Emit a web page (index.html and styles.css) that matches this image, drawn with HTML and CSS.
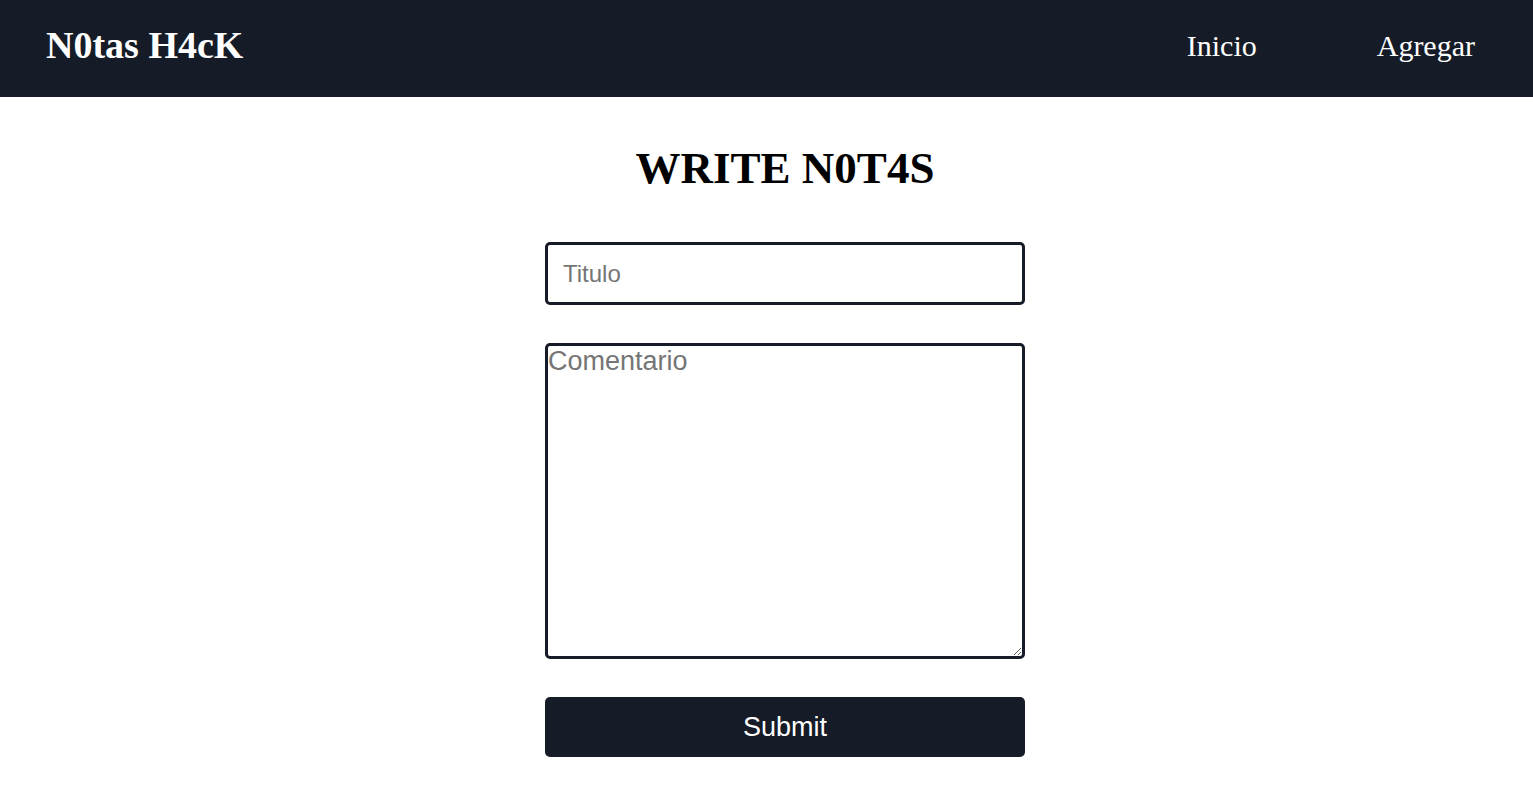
FILE: index.html
```html
<!DOCTYPE html>
<html lang="es">
<head>
<meta charset="utf-8">
<title>N0tas H4cK</title>
<link rel="stylesheet" href="styles.css">
</head>
<body>
<header class="topbar">
  <div class="brand">N0tas H4cK</div>
  <nav class="nav">
    <a class="nav-link" href="#">Inicio</a>
    <a class="nav-link" href="#">Agregar</a>
  </nav>
</header>
<main class="main">
  <h1 class="page-title">WRITE N0T4S</h1>
  <form class="note-form">
    <input class="field-title" type="text" placeholder="Titulo">
    <textarea class="field-comment" placeholder="Comentario"></textarea>
    <button class="submit-btn" type="button">Submit</button>
  </form>
</main>
</body>
</html>
```
FILE: styles.css
```css
* { box-sizing: border-box; }
html, body { margin: 0; padding: 0; background: #fff; }
body { font-family: "Liberation Serif", "Times New Roman", serif; }

.topbar {
  height: 97px;
  background: #161c27;
  display: flex;
  align-items: flex-start;
  justify-content: space-between;
  padding: 0 58px 0 46px;
}
.brand {
  margin-top: 23px;
  color: #fff;
  font-weight: bold;
  font-size: 38px;
  line-height: 44px;
}
.nav {
  margin-top: 29px;
  display: flex;
  gap: 120px;
}
.nav-link {
  color: #fff;
  text-decoration: none;
  font-size: 30px;
  line-height: 34px;
}

.main {
  display: flex;
  flex-direction: column;
  align-items: center;
  padding-left: 37px;
}
.page-title {
  margin: 45px 0 48px;
  font-size: 45px;
  line-height: 52px;
  font-weight: bold;
  color: #000;
}
.note-form {
  width: 480px;
  display: flex;
  flex-direction: column;
  gap: 38px;
}
.field-title, .field-comment {
  width: 100%;
  border: 3px solid #161c27;
  border-radius: 5px;
  font-family: "Liberation Sans", Arial, sans-serif;
  color: #000;
  background: #fff;
  outline: none;
}
.field-title {
  height: 63px;
  padding: 0 15px;
  font-size: 24px;
}
.field-comment {
  height: 316px;
  padding: 0;
  font-size: 27px;
  resize: both;
}
.field-title::placeholder, .field-comment::placeholder { color: #757575; }
.submit-btn {
  height: 60px;
  width: 100%;
  border: none;
  border-radius: 5px;
  background: #161c27;
  color: #fff;
  font-family: "Liberation Sans", Arial, sans-serif;
  font-size: 27px;
  cursor: pointer;
}
```
